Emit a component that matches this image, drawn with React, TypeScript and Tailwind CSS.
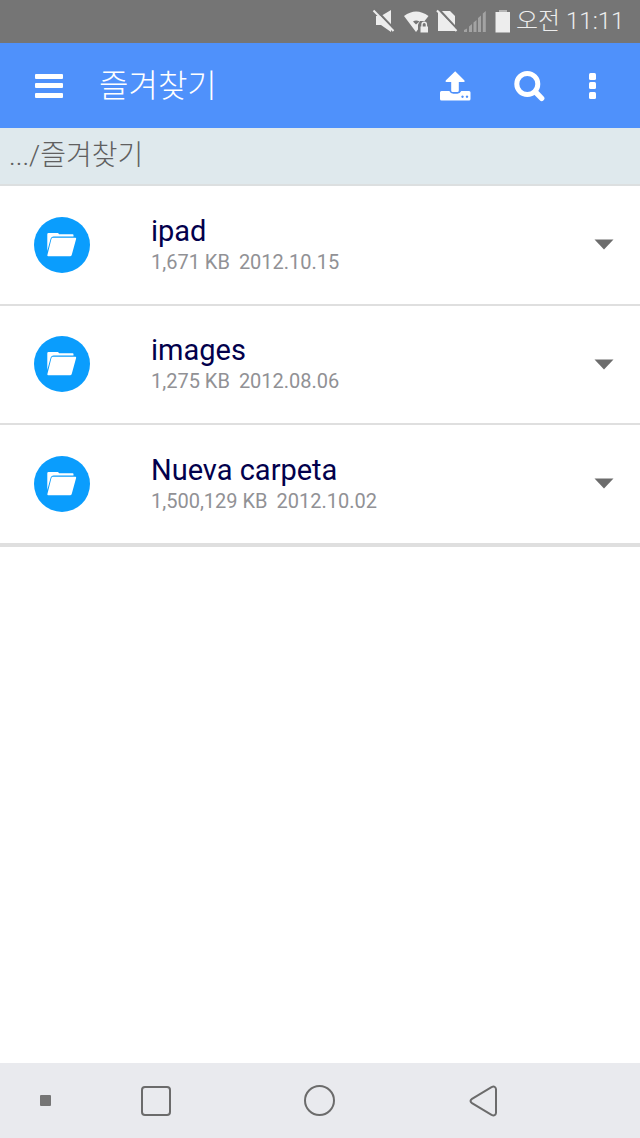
import React from 'react'

const files = [
  { name: 'ipad', size: '1,671 KB', date: '2012.10.15' },
  { name: 'images', size: '1,275 KB', date: '2012.08.06' },
  { name: 'Nueva carpeta', size: '1,500,129 KB', date: '2012.10.02' },
]

function StatusBar() {
  return (
    <div className="h-[43px] bg-[#757575] flex justify-end items-center pr-[12px] text-[#ededed]">
      <svg className="w-[140px] h-[43px]" viewBox="372 0 140 43" fill="currentColor">
        {/* muted speaker */}
        <path d="M376 16h5l10-6v22l-10-7h-5z" />
        <path d="M375 9l20 21" stroke="#757575" strokeWidth="2.5" />
        <path d="M373.500 10.500l20 20.500" stroke="currentColor" strokeWidth="2" />
        {/* secured wifi */}
        <path d="M404 16Q416 7 428.500 16L416 32z" />
        <path d="M413 21.500q3-2 6.500 0L416 24.500z" fill="#757575" />
        <path d="M418 33V24.500l2-3.500h9v12z" fill="#757575" />
        <path d="M420.500 26.500h7.500v6h-7.500z" />
        <path d="M422 27v-2.500a2.200 2.200 0 0 1 4.400 0V27" fill="none" stroke="currentColor" strokeWidth="1.400" />
        {/* no sim */}
        <path d="M438 11h12l5 5v15h-17z" />
        <path d="M438.500 9l19 20.500" stroke="#757575" strokeWidth="2.500" />
        <path d="M437 10.500l19.500 20.500" stroke="currentColor" strokeWidth="2" />
        {/* empty signal */}
        <g fill="#a3a3a3">
          <path d="M464 32v-2l3-1.500V32zM469 26.500l3-2.500v8h-3zM473.500 22.500l3-2.500v12h-3zM478 18l3-2.500V32h-3zM482.800 13.500l3-2.500v21h-3z" />
        </g>
        {/* battery */}
        <path d="M499 10h8v2h-8z" fill="#b5b5b5" />
        <path d="M495.500 12h14.500v20.500h-14.500z" />
      </svg>
      <span className="w-[116px] pl-[4px] text-[24px] leading-[43px] whitespace-nowrap font-light">
        오전 11:11
      </span>
    </div>
  )
}

function Header() {
  return (
    <div className="h-[85px] bg-[#4f91fb] flex items-center text-white">
      <button className="ml-[35px] w-[28px] h-6 flex flex-col justify-between">
        <span className="w-full h-[5px] rounded-[1px] bg-white"></span>
        <span className="w-full h-[5px] rounded-[1px] bg-white"></span>
        <span className="w-full h-[5px] rounded-[1px] bg-white"></span>
      </button>
      <h1 className="ml-[36px] text-[32px] leading-none font-light">즐겨찾기</h1>
      <svg className="ml-auto w-[31px] h-[30px]" viewBox="440 70 31 30" fill="currentColor">
        <path d="M455.200 70.300l9.300 9.200q.8 1.500-1 1.500h-4.700v8.500q0 1.500-1.500 1.500h-4.600q-1.500 0-1.500-1.500V81h-4.500q-1.800 0-1-1.500z" />
        <path
          fillRule="evenodd"
          d="M441.500 90h7.800q1.200 2.700 4 2.700h4q2.700 0 4-2.700h7.700q1.500 0 1.500 1.500v6.500q0 1.500-1.500 1.500h-27.500q-1.500 0-1.500-1.500v-6.500q0-1.500 1.500-1.500zM462.500 94.500a1.200 1.200 0 1 0 .01 0zM467 94.500a1.200 1.200 0 1 0 .01 0z"
        />
      </svg>
      <svg className="ml-[43px] w-[32px] h-[32px]" viewBox="514 70 32 32" fill="none" stroke="currentColor">
        <circle cx="527.300" cy="84" r="10.500" strokeWidth="5" />
        <path d="M535.500 92l6.200 6.300" strokeWidth="5.400" strokeLinecap="round" />
      </svg>
      <div className="ml-[43px] mr-[44px] h-[26px] flex flex-col justify-between">
        <span className="size-[7px] rounded-[1.500px] bg-white"></span>
        <span className="size-[7px] rounded-[1.500px] bg-white"></span>
        <span className="size-[7px] rounded-[1.500px] bg-white"></span>
      </div>
    </div>
  )
}

function FolderIcon() {
  return (
    <div className="ml-[34px] size-[56px] rounded-full bg-[#0a9dfd] flex items-center justify-center">
      <svg className="w-[30px] h-[24px]" viewBox="48 233 30 24" fill="white">
        <path d="M48.300 251V234.200q0-1.200 1.200-1.200h9.500l1.200 1.200h13.500q.8 0 .8 1.100v1.200H54.500q-2 0-2.800 2z" />
        <path d="M53.800 237.700h22.500q1.100 0 .8 1.200l-4.300 15.800q-.4 1.500-1.800 1.500H49.200q-1.100 0-.8-1.200l4-16q.4-1.300 1.400-1.300z" />
      </svg>
    </div>
  )
}

function App() {
  return (
    <div className="w-[640px] h-[1138px] flex flex-col bg-white overflow-hidden font-[Roboto,'Noto_Sans_CJK_KR',sans-serif]">
      <StatusBar />
      <Header />
      <div className="h-[58px] pl-[9px] bg-[#dfe9ed] border-b-2 border-[#dcdfe0] text-[28px] leading-[56px] text-[#606060] font-light">
        .../즐겨찾기
      </div>
      <ul className="border-b-2 border-[#dfdfdf]">
        {files.map((file) => (
          <li key={file.name} className="h-[119.500px] flex items-center border-b-2 border-[#dfdfdf]">
            <FolderIcon />
            <div className="ml-[61px]">
              <p className="text-[29px] leading-[34px] text-[#02004c]">{file.name}</p>
              <p className="text-[20px] leading-[28px] text-[#919195] flex gap-[9px]">
                <span>{file.size}</span>
                <span>{file.date}</span>
              </p>
            </div>
            <svg className="ml-auto mr-[26px] w-[20px] h-[11px]" viewBox="0 0 20 11">
              <path d="M.5.500h19L10 10.500z" fill="#6c6c6c" />
            </svg>
          </li>
        ))}
      </ul>
      <nav className="mt-auto h-[75px] bg-[#e9eaee] flex items-center">
        <span className="ml-[40px] size-[11px] rounded-[1px] bg-[#757575]"></span>
        <span className="ml-[90px] size-[30px] rounded-[4px] border-2 border-[#6b6b6b]"></span>
        <span className="ml-[133px] size-[31px] rounded-full border-2 border-[#6b6b6b]"></span>
        <svg className="ml-[134px] w-[29px] h-[32px]" viewBox="0 0 29 32" fill="none">
          <path
            d="M3 13.900L22.500 2.100q4-1.600 4.500 2v23.800q-.5 3.600-4.500 2L3 18.100q-3-2.100 0-4.200z"
            stroke="#6b6b6b"
            strokeWidth="2"
          />
        </svg>
      </nav>
    </div>
  )
}

export default App
